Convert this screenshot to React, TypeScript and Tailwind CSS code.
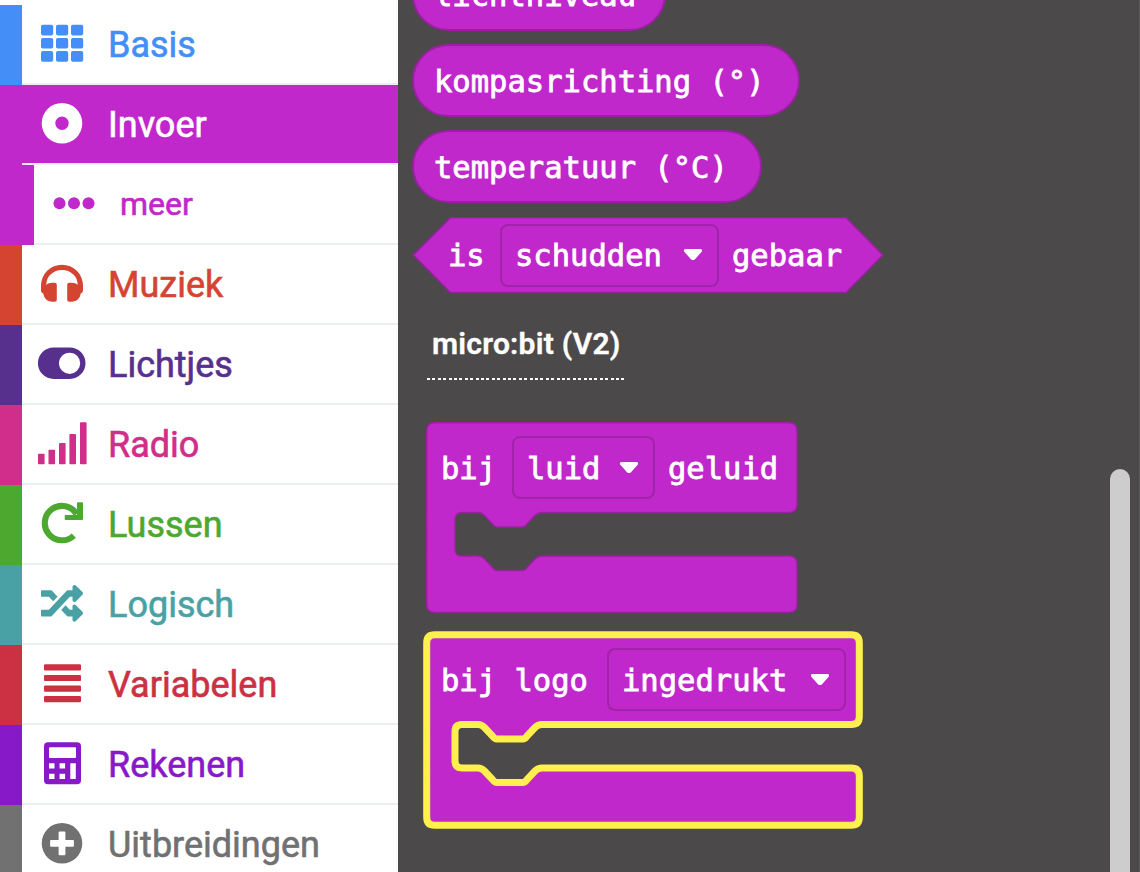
import type { ReactNode } from "react";

type Category = {
  label: string;
  strip: string;
  text: string;
  icon: ReactNode;
};

const categories: Category[] = [
  {
    label: "Basis",
    strip: "bg-[#448ff7]",
    text: "text-[#448ff7]",
    icon: (
      <g>
        {[19.8, 33, 46.1].map((y) =>
          [19, 34, 49].map((x) => <rect key={`${x}-${y}`} x={x} y={y} width="12.2" height="10.6" rx="1.8" />),
        )}
      </g>
    ),
  },
  {
    label: "Invoer",
    strip: "bg-[#c028cb]",
    text: "text-white",
    icon: <path fillRule="evenodd" d="M40 18a20.3 20.3 0 1 1 0 40.6a20.3 20.3 0 1 1 0-40.6zM40 31.6a6.7 6.7 0 1 0 0 13.4a6.7 6.7 0 1 0 0-13.4z" />,
  },
  {
    label: "Muziek",
    strip: "bg-[#d54431]",
    text: "text-[#d54431]",
    icon: (
      <path d="M19 40.7a21 21 0 0 1 42 0v4.8c0 1.5-1 2.2-2.3 3c-.7 5-4.2 8.2-9 8.2h-2.5a2 2 0 0 1-2-2v-15a2 2 0 0 1 2-2h2.5c2.6 0 4.6.8 6 2c0-8.6-7-14.8-15.7-14.8s-15.7 6.2-15.7 14.8c1.4-1.2 3.4-2 6-2h2.5a2 2 0 0 1 2 2v15a2 2 0 0 1-2 2h-2.5c-4.8 0-8.3-3.2-9-8.2c-1.3-.8-2.3-1.5-2.3-3z" />
    ),
  },
  {
    label: "Lichtjes",
    strip: "bg-[#572f8d]",
    text: "text-[#572f8d]",
    icon: <path fillRule="evenodd" d="M31.7 22.4h16a15.8 15.8 0 0 1 0 31.6h-16a15.8 15.8 0 0 1 0-31.6zM47.6 27.7a10.6 10.6 0 1 0 0 21.2a10.6 10.6 0 1 0 0-21.2z" />,
  },
  {
    label: "Radio",
    strip: "bg-[#d12d8a]",
    text: "text-[#d12d8a]",
    icon: (
      <g>
        <rect x="16" y="48.8" width="6.6" height="10.4" rx="0.8" />
        <rect x="26.5" y="44.8" width="6.6" height="14.4" rx="0.8" />
        <rect x="37" y="38" width="6.6" height="21.2" rx="0.8" />
        <rect x="47.4" y="29" width="6.6" height="30.2" rx="0.8" />
        <rect x="58" y="17.2" width="6.6" height="42" rx="0.8" />
      </g>
    ),
  },
  {
    label: "Lussen",
    strip: "bg-[#4ca82f]",
    text: "text-[#4ca82f]",
    icon: (
      <g>
        <path d="M54.7 29.2A17.2 17.2 0 1 0 51.8 50.6" fill="none" stroke="currentColor" strokeWidth="6.1" strokeLinejoin="round" />
        <path d="M56 17.2h4a1 1 0 0 1 1 1V34.1a1 1 0 0 1-1 1H43.7a1 1 0 0 1-1-1v-3a1 1 0 0 1 1-1H55V18.2a1 1 0 0 1 1-1z" />
      </g>
    ),
  },
  {
    label: "Logisch",
    strip: "bg-[#4aa1a5]",
    text: "text-[#4aa1a5]",
    icon: (
      <path transform="translate(19 17.3) scale(0.082)" d="M504.971 359.029c9.373 9.373 9.373 24.569 0 33.941l-80 79.984c-15.01 15.01-40.971 4.49-40.971-16.971V416h-58.785a12.004 12.004 0 0 1-8.773-3.812l-70.556-75.596 53.333-57.143L352 336h32v-39.981c0-21.438 25.943-31.998 40.971-16.971l80 79.981zM12 176h84l52.781 56.551 53.333-57.143-70.556-75.596A11.999 11.999 0 0 0 122.785 96H12c-6.627 0-12 5.373-12 12v56c0 6.627 5.373 12 12 12zm372 0v39.984c0 21.46 25.961 31.98 40.971 16.971l80-79.984c9.373-9.373 9.373-24.569 0-33.941l-80-79.981C409.943 24.021 384 34.582 384 56.019V96h-58.785a12.004 12.004 0 0 0-8.773 3.812L96 336H12c-6.627 0-12 5.373-12 12v56c0 6.627 5.373 12 12 12h110.785c3.326 0 6.503-1.381 8.773-3.812L352 176h32z" />
    ),
  },
  {
    label: "Variabelen",
    strip: "bg-[#cb3142]",
    text: "text-[#cb3142]",
    icon: (
      <g>
        {[19.3, 29.9, 40.5, 51].map((y) => (
          <rect key={y} x="22" y={y} width="37" height="6.2" rx="1.2" />
        ))}
      </g>
    ),
  },
  {
    label: "Rekenen",
    strip: "bg-[#8819c8]",
    text: "text-[#8819c8]",
    icon: (
      <path fillRule="evenodd" d="M26 17.2h29a4 4 0 0 1 4 4v34a4 4 0 0 1-4 4H26a4 4 0 0 1-4-4v-34a4 4 0 0 1 4-4zM28 22.2a1 1 0 0 0-1 1v8.9a1 1 0 0 0 1 1h25a1 1 0 0 0 1-1v-8.9a1 1 0 0 0-1-1zM27 38.3v5.2h5.5v-5.2zM37.6 38.3v5.2h5.5v-5.2zM48.3 38.3v15.6h5.5V38.3zM27 48.8v5.2h5.5v-5.2zM37.6 48.8v5.2h5.5v-5.2z" />
    ),
  },
  {
    label: "Uitbreidingen",
    strip: "bg-[#717171]",
    text: "text-[#717171]",
    icon: (
      <path fillRule="evenodd" d="M40 18a20.3 20.3 0 1 1 0 40.6a20.3 20.3 0 1 1 0-40.6zM37.6 26.4a1 1 0 0 0-1 1v7.5h-7.5a1 1 0 0 0-1 1v4.8a1 1 0 0 0 1 1h7.5v7.5a1 1 0 0 0 1 1h4.8a1 1 0 0 0 1-1v-7.5h7.5a1 1 0 0 0 1-1v-4.8a1 1 0 0 0-1-1h-7.5v-7.5a1 1 0 0 0-1-1z" />
    ),
  },
];

function CategoryRow({ category }: { category: Category }) {
  const active = category.label === "Invoer";
  return (
    <li className={`flex h-20 shrink-0 ${category.text}`}>
      <div className={`w-[22px] shrink-0 ${category.strip}`} />
      <div className={`flex flex-1 border-b-2 border-[#ebefef] ${active ? "bg-[#c028cb]" : "bg-white"}`}>
        <svg className="h-[78px] w-[86px] shrink-0" viewBox="0 0 86 78" fill="currentColor">
          {category.icon}
        </svg>
        <span className="text-[36px] leading-[81px] [-webkit-text-stroke:0.6px_currentColor]">{category.label}</span>
      </div>
    </li>
  );
}

function MoreRow() {
  return (
    <li className="flex h-20 shrink-0 text-[#c028cb]">
      <div className="w-[34px] shrink-0 bg-[#c028cb]" />
      <div className="flex flex-1 border-b-2 border-[#ebefef]">
        <svg className="h-[78px] w-[86px] shrink-0" viewBox="0 0 86 78" fill="currentColor">
          <circle cx="25.5" cy="38.2" r="6" />
          <circle cx="40" cy="38.2" r="6" />
          <circle cx="54.5" cy="38.2" r="6" />
        </svg>
        <span className="text-[32px] leading-[79px] [-webkit-text-stroke:0.6px_currentColor]">meer</span>
      </div>
    </li>
  );
}

function Dropdown({ label, width }: { label: string; width: string }) {
  return (
    <div className={`flex h-[63px] shrink-0 items-center justify-between rounded-lg border-2 border-[#a023aa] pr-[14px] pl-[13px] ${width}`}>
      <span className="pt-0.5">{label}</span>
      <svg className="h-[14px] w-5" viewBox="0 0 20 14">
        <path d="M2.5 1h15c1.6 0 2.2 1.8 1 3l-6.5 7.2c-1.1 1.2-2.9 1.2-4 0L1.5 4C.3 2.8.9 1 2.5 1z" fill="white" />
      </svg>
    </div>
  );
}

function Reporter({ label, size }: { label: string; size: string }) {
  return (
    <div className={`flex h-[73px] shrink-0 items-center rounded-full border-2 border-[#9a20a2] bg-[#c028cb] pt-[3px] pl-5 ${size}`}>
      <span>{label}</span>
    </div>
  );
}

const notchLeftward = "h-13c-3 0-5 1-7 3l-8 8.5c-1.5 2-2 3-4 3h-26c-2.5 0-3-1-4.5-3l-8-8.5c-2-2-3.5-3-6.5-3h-16";
const notchRightward = "h16c3 0 4.5 1 6.5 3l8 8.5c1.5 2 2 3 4.5 3h26c2 0 2.5-1 4-3l8-8.5c2-2 4-3 7-3h13";

function BlockShape({ right, bottom, selected }: { right: number; bottom: number; selected?: boolean }) {
  const d = `M13.7 5.7H${right - 8}q8 0 8 8V87.5q0 8-8 8H134${notchLeftward}q-7 0-7 7v29.5q0 7 7 7${notchRightward}H${right - 8}q8 0 8 8V${bottom - 8}q0 8-8 8H13.7q-8 0-8-8V13.7q0-8 8-8z`;
  return (
    <svg className="absolute inset-0 h-full w-full" fill="#c028cb">
      <path d={d} stroke={selected ? "#fff04d" : "#9a20a2"} strokeWidth={selected ? 7 : 1.5} />
    </svg>
  );
}

export default function App() {
  return (
    <main className="flex h-[872px] w-[1140px] overflow-hidden bg-[#4b4949]">
      <ul className="flex w-[398px] shrink-0 flex-col overflow-hidden bg-white pt-[5px] font-['Roboto',sans-serif]">
        {categories.slice(0, 2).map((category) => (
          <CategoryRow key={category.label} category={category} />
        ))}
        <MoreRow />
        {categories.slice(2).map((category) => (
          <CategoryRow key={category.label} category={category} />
        ))}
      </ul>
      <section className="flex flex-1 flex-col items-start pl-[14px] font-['DejaVu_Sans_Mono',monospace] text-[30.5px] leading-[36px] whitespace-pre text-white [-webkit-text-stroke:0.8px_white]">
        <div className="-mt-[42px] flex flex-col gap-[13px]">
          <Reporter label="lichtniveau" size="w-[254px]" />
          <Reporter label="kompasrichting (°)" size="w-[388px]" />
          <Reporter label="temperatuur (°C)" size="w-[350px]" />
        </div>
        <div className="relative mt-[14px] flex h-[77px] w-[473px] items-center pl-[36px]">
          <svg className="absolute inset-0 h-full w-full">
            <path d="M38.5 0.8H434L470.8 38L434 75.6H38.5L1.3 38z" fill="#c028cb" stroke="#9a20a2" strokeWidth="1.5" />
          </svg>
          <div className="relative -mt-px flex items-center">
            <span className="w-[52px] pt-0.5">is</span>
            <Dropdown label="schudden" width="w-[219px]" />
            <span className="ml-[13px] pt-0.5">gebaar</span>
          </div>
        </div>
        <h2 className="mt-[32px] ml-[15px] flex h-[54px] w-[198px] flex-col justify-between pl-[5px] font-['Roboto',sans-serif] text-[30px] leading-[36px] font-semibold tracking-[0.25px] [-webkit-text-stroke:0.4px_white]">
          <span>micro:bit (V2)</span>
          <span className="-ml-[5px] h-0.5 w-[198px] bg-[repeating-linear-gradient(90deg,#fff_0_3px,transparent_3px_5.4px)]" />
        </h2>
        <div className="relative mt-[37px] ml-[9px] h-[202px] w-[384px] pt-[19px] pl-[20px]">
          <BlockShape right={376} bottom={195.5} />
          <div className="relative flex items-center">
            <span className="w-[71px] pt-[3px]">bij</span>
            <Dropdown label="luid" width="w-[143px]" />
            <span className="ml-[13px] pt-[3px]">geluid</span>
          </div>
        </div>
        <div className="relative mt-[10px] ml-[9px] h-[202px] w-[448px] pt-[19px] pl-[20px]">
          <BlockShape right={438.3} bottom={196.3} selected />
          <div className="relative flex items-center">
            <span className="w-[166px] pt-[3px]">bij logo</span>
            <Dropdown label="ingedrukt" width="w-[239px]" />
          </div>
        </div>
      </section>
      <aside className="flex w-[30px] shrink-0 flex-col border-r border-[#5c5a5a] pt-[469px]">
        <div className="h-[500px] w-5 shrink-0 rounded-full bg-[#cdcdcd]" />
      </aside>
    </main>
  );
}
